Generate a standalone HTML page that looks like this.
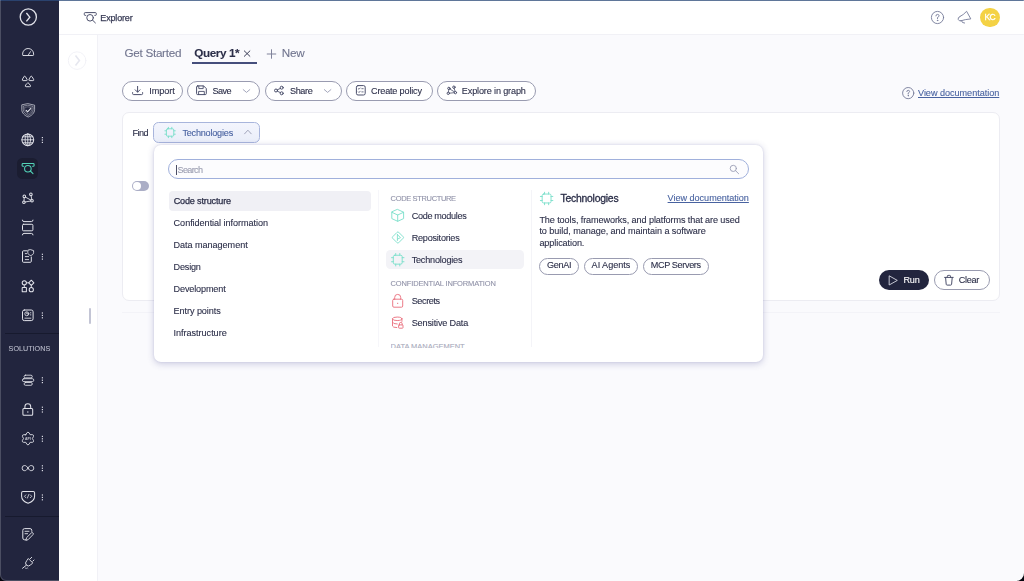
<!DOCTYPE html>
<html><head><meta charset="utf-8">
<style>
*{box-sizing:border-box;margin:0;padding:0}
html,body{width:1024px;height:581px;overflow:hidden;background:#fafafd;font-family:"Liberation Sans",sans-serif;color:#2b2e48}
.a{position:absolute}
.t{position:absolute;white-space:nowrap;-webkit-text-stroke:0.1px currentColor}
.pill{position:absolute;border:1px solid #999bb0;background:#fff}
#ic{position:absolute;left:0;top:0;width:1024px;height:581px;pointer-events:none}
</style></head><body>
<!-- sidebar -->
<div class="a" style="left:0;top:0;width:58.5px;height:581px;background:#22253e"></div>
<div class="a" style="left:17.3px;top:157.8px;width:21.1px;height:21.7px;border-radius:5.5px;background:#1b1d31"></div>
<div class="a" style="left:5px;top:333px;width:54px;height:1px;background:#171a2e"></div>
<div class="a" style="left:5px;top:516px;width:54px;height:1px;background:#171a2e"></div>
<!-- header -->
<div class="a" style="left:59px;top:0;width:965px;height:34px;background:#fff"></div>
<div class="a" style="left:59px;top:34px;width:965px;height:1px;background:#f1f1f6"></div>
<div class="a" style="left:979.9px;top:7.7px;width:19.7px;height:19.7px;border-radius:10px;background:#f4d245"></div>
<!-- left collapsed panel -->
<div class="a" style="left:59px;top:35px;width:38px;height:546px;background:#fff"></div>
<div class="a" style="left:97px;top:35px;width:1px;height:546px;background:#f1f1f6"></div>
<div class="a" style="left:89px;top:307.6px;width:1.8px;height:16.8px;background:#c3c5d5;border-radius:1px"></div>
<!-- window edge lines -->
<div class="a" style="left:0;top:0;width:1024px;height:1px;background:#5f7699"></div>
<div class="a" style="left:0;top:0;width:58.5px;height:1px;background:#2a426e"></div>
<div class="a" style="left:0;top:-12px;width:1024px;height:593px;border:1px solid rgba(255,255,255,.19);border-radius:0 0 8px 6px;box-shadow:0 0 0 20px #04050d"></div>
<!-- tab underline -->
<div class="a" style="left:191.5px;top:62px;width:65px;height:2px;background:#454e7c"></div>
<!-- toolbar pills -->
<div class="pill" style="left:122px;top:81px;width:61px;height:19.5px;border-radius:10px"></div>
<div class="pill" style="left:187px;top:81px;width:73px;height:19.5px;border-radius:10px"></div>
<div class="pill" style="left:265px;top:81px;width:76.5px;height:19.5px;border-radius:10px"></div>
<div class="pill" style="left:346px;top:81px;width:86.5px;height:19.5px;border-radius:10px"></div>
<div class="pill" style="left:437px;top:81px;width:99px;height:19.5px;border-radius:10px"></div>
<!-- card -->
<div class="a" style="left:122px;top:112px;width:878px;height:188.5px;background:#fff;border:1px solid #ececf2;border-radius:7px"></div>
<div class="a" style="left:153px;top:122px;width:107px;height:20.5px;background:linear-gradient(#f3f5fd,#eaeef9);border:1px solid #a8b5dc;border-radius:5.5px"></div>
<div class="a" style="left:132px;top:181px;width:17px;height:10px;border-radius:5px;background:#abaec6"></div>
<div class="a" style="left:133px;top:182px;width:8px;height:8px;border-radius:4px;background:#fff"></div>
<div class="a" style="left:879px;top:270px;width:50.2px;height:20px;border-radius:10px;background:#22253e"></div>
<div class="pill" style="left:934px;top:270px;width:56px;height:20px;border-radius:10px"></div>
<div class="a" style="left:122px;top:312px;width:878px;height:1px;background:#f3f3f8"></div>
<!-- dropdown -->
<div class="a" style="left:154px;top:145px;width:609px;height:216.8px;background:#fff;border-radius:7px;box-shadow:0 1.5px 7px rgba(60,60,140,.24),0 0 2px rgba(60,60,140,.16)"></div>
<div class="a" style="left:168px;top:159px;width:581.2px;height:19.8px;border:1px solid #a0b0dc;border-radius:10px;background:#fcfcfe"></div>
<div class="a" style="left:176px;top:164.5px;width:1px;height:10px;background:#4a4d66"></div>
<div class="a" style="left:169px;top:191px;width:202px;height:19.5px;background:#f0f0f5;border-radius:4px"></div>
<div class="a" style="left:386px;top:249.7px;width:138px;height:19.8px;background:#f3f3f7;border-radius:4.5px"></div>
<div class="a" style="left:531px;top:190px;width:1px;height:157px;background:#f4f4f8"></div>
<div class="a" style="left:378px;top:190px;width:1px;height:157px;background:#f6f6fa"></div>
<div class="a" style="left:390.6px;top:343px;width:80px;height:4.5px;overflow:hidden"><div class="t" style="left:0;top:0.4px;font-size:7.5px;line-height:8.6px;color:#a9abbc;letter-spacing:-0.02px">DATA MANAGEMENT</div></div>
<div class="pill" style="left:539.4px;top:257.5px;width:40px;height:17px;border-radius:9px"></div>
<div class="pill" style="left:583.9px;top:257.5px;width:54px;height:17px;border-radius:9px"></div>
<div class="pill" style="left:643.2px;top:257.5px;width:65.6px;height:17px;border-radius:9px"></div>
<div id="tx" style="position:absolute;left:0;top:0;width:1024px;height:581px;will-change:transform">
<div class="t" style="left:100.30px;top:13.46px;font-size:9px;line-height:10.341px;font-weight:400;color:#3a3d57;letter-spacing:-0.159px;-webkit-text-stroke:0.25px #3a3d57;">Explorer</div>
<div class="t" style="left:984.40px;top:13.11px;font-size:8.5px;line-height:9.767px;font-weight:400;color:#ffffff;letter-spacing:-0.612px;-webkit-text-stroke:0.3px #fff;">KC</div>
<div class="t" style="left:124.50px;top:46.31px;font-size:11.7px;line-height:13.443px;font-weight:400;color:#70748e;letter-spacing:-0.288px;">Get Started</div>
<div class="t" style="left:194.20px;top:46.31px;font-size:11.7px;line-height:13.443px;font-weight:700;color:#2b2e48;letter-spacing:-0.383px;">Query 1*</div>
<div class="t" style="left:281.80px;top:46.31px;font-size:11.7px;line-height:13.443px;font-weight:400;color:#70748e;letter-spacing:-0.195px;">New</div>
<div class="t" style="left:149.30px;top:85.66px;font-size:9.1px;line-height:10.456px;font-weight:400;color:#2b2e48;letter-spacing:-0.036px;">Import</div>
<div class="t" style="left:212.50px;top:85.66px;font-size:9.1px;line-height:10.456px;font-weight:400;color:#2b2e48;letter-spacing:-0.545px;">Save</div>
<div class="t" style="left:290.00px;top:85.66px;font-size:9.1px;line-height:10.456px;font-weight:400;color:#2b2e48;letter-spacing:-0.395px;">Share</div>
<div class="t" style="left:371.00px;top:85.66px;font-size:9.1px;line-height:10.456px;font-weight:400;color:#2b2e48;letter-spacing:-0.173px;">Create policy</div>
<div class="t" style="left:461.80px;top:85.66px;font-size:9.1px;line-height:10.456px;font-weight:400;color:#2b2e48;letter-spacing:-0.142px;">Explore in graph</div>
<div class="t" style="left:918.00px;top:87.76px;font-size:9.1px;line-height:10.456px;font-weight:400;color:#4862a0;letter-spacing:-0.026px;text-decoration:underline;text-underline-offset:1px;">View documentation</div>
<div class="t" style="left:132.40px;top:128.36px;font-size:9.1px;line-height:10.456px;font-weight:400;color:#2b2e48;letter-spacing:-0.534px;">Find</div>
<div class="t" style="left:182.40px;top:128.36px;font-size:9.1px;line-height:10.456px;font-weight:400;color:#4862a0;letter-spacing:-0.209px;">Technologies</div>
<div class="t" style="left:177.60px;top:165.46px;font-size:9.1px;line-height:10.456px;font-weight:400;color:#9a9db0;letter-spacing:-0.686px;">Search</div>
<div class="t" style="left:173.70px;top:195.66px;font-size:9.1px;line-height:10.456px;font-weight:400;color:#2b2e48;letter-spacing:-0.166px;-webkit-text-stroke:0.25px #2b2e48;">Code structure</div>
<div class="t" style="left:173.60px;top:217.86px;font-size:9.1px;line-height:10.456px;font-weight:400;color:#2b2e48;letter-spacing:-0.046px;">Confidential information</div>
<div class="t" style="left:173.60px;top:239.86px;font-size:9.1px;line-height:10.456px;font-weight:400;color:#2b2e48;letter-spacing:-0.052px;">Data management</div>
<div class="t" style="left:173.60px;top:261.76px;font-size:9.1px;line-height:10.456px;font-weight:400;color:#2b2e48;letter-spacing:-0.202px;">Design</div>
<div class="t" style="left:173.60px;top:283.76px;font-size:9.1px;line-height:10.456px;font-weight:400;color:#2b2e48;letter-spacing:-0.149px;">Development</div>
<div class="t" style="left:173.60px;top:305.76px;font-size:9.1px;line-height:10.456px;font-weight:400;color:#2b2e48;letter-spacing:-0.076px;">Entry points</div>
<div class="t" style="left:173.60px;top:327.76px;font-size:9.1px;line-height:10.456px;font-weight:400;color:#2b2e48;letter-spacing:-0.037px;">Infrastructure</div>
<div class="t" style="left:390.60px;top:195.31px;font-size:7.5px;line-height:8.617px;font-weight:400;color:#9092a8;letter-spacing:-0.347px;">CODE STRUCTURE</div>
<div class="t" style="left:411.70px;top:210.56px;font-size:9.1px;line-height:10.456px;font-weight:400;color:#2b2e48;letter-spacing:-0.331px;">Code modules</div>
<div class="t" style="left:411.70px;top:232.56px;font-size:9.1px;line-height:10.456px;font-weight:400;color:#2b2e48;letter-spacing:-0.232px;">Repositories</div>
<div class="t" style="left:411.70px;top:255.36px;font-size:9.1px;line-height:10.456px;font-weight:400;color:#2b2e48;letter-spacing:-0.209px;">Technologies</div>
<div class="t" style="left:390.60px;top:280.01px;font-size:7.5px;line-height:8.617px;font-weight:400;color:#9092a8;letter-spacing:-0.150px;">CONFIDENTIAL INFORMATION</div>
<div class="t" style="left:411.70px;top:295.76px;font-size:9.1px;line-height:10.456px;font-weight:400;color:#2b2e48;letter-spacing:-0.391px;">Secrets</div>
<div class="t" style="left:411.70px;top:317.66px;font-size:9.1px;line-height:10.456px;font-weight:400;color:#2b2e48;letter-spacing:-0.157px;">Sensitive Data</div>
<div class="t" style="left:560.50px;top:193.49px;font-size:10.4px;line-height:11.95px;font-weight:400;color:#2b2e48;letter-spacing:-0.232px;-webkit-text-stroke:0.3px #2b2e48;">Technologies</div>
<div class="t" style="left:667.60px;top:192.96px;font-size:9.1px;line-height:10.456px;font-weight:400;color:#4862a0;letter-spacing:-0.026px;text-decoration:underline;text-underline-offset:1px;">View documentation</div>
<div class="t" style="left:539.40px;top:214.56px;font-size:9.1px;line-height:10.456px;font-weight:400;color:#2b2e48;letter-spacing:-0.099px;">The tools, frameworks, and platforms that are used</div>
<div class="t" style="left:539.40px;top:226.26px;font-size:9.1px;line-height:10.456px;font-weight:400;color:#2b2e48;letter-spacing:-0.061px;">to build, manage, and maintain a software</div>
<div class="t" style="left:539.40px;top:238.26px;font-size:9.1px;line-height:10.456px;font-weight:400;color:#2b2e48;letter-spacing:-0.092px;">application.</div>
<div class="t" style="left:547.10px;top:260.26px;font-size:9.1px;line-height:10.456px;font-weight:400;color:#2b2e48;letter-spacing:-0.345px;">GenAI</div>
<div class="t" style="left:591.60px;top:260.26px;font-size:9.1px;line-height:10.456px;font-weight:400;color:#2b2e48;letter-spacing:-0.030px;">AI Agents</div>
<div class="t" style="left:650.70px;top:260.26px;font-size:9.1px;line-height:10.456px;font-weight:400;color:#2b2e48;letter-spacing:-0.351px;">MCP Servers</div>
<div class="t" style="left:903.50px;top:274.96px;font-size:9.1px;line-height:10.456px;font-weight:400;color:#ffffff;letter-spacing:-0.194px;">Run</div>
<div class="t" style="left:958.80px;top:274.96px;font-size:9.1px;line-height:10.456px;font-weight:400;color:#2b2e48;letter-spacing:-0.334px;">Clear</div>
<div class="t" style="left:8.60px;top:345.48px;font-size:7.2px;line-height:8.273px;font-weight:400;color:#b9bbca;letter-spacing:0.007px;">SOLUTIONS</div>
</div>
<svg id="ic" width="1024" height="581" viewBox="0 0 1024 581" fill="none" stroke-linecap="round" stroke-linejoin="round">
<!-- ===== sidebar icons ===== -->
<g stroke="#e2e3ea" stroke-width="1.02">
 <!-- top circle chevron -->
 <circle cx="28.3" cy="17" r="8.1" stroke-width="1.3"/>
 <path d="M26.4 13 L29.8 17.2 L26.4 21.4" stroke-width="1.35" stroke-linecap="butt" stroke-linejoin="miter"/>
 <!-- gauge -->
 <path d="M23.3 55.5 H32.9 Q33.6 55.5 33.6 54.8 V54 A5.5 5.5 0 0 0 22.6 54 V54.8 Q22.6 55.5 23.3 55.5 Z" stroke-width="0.95"/>
 <path d="M28.2 55.2 L30.4 51.7" stroke-width="0.9"/>
 <!-- three triangles -->
 <path d="M24.00 76.60 Q24.70 75.20 25.40 76.60 L27.00 79.30 Q27.60 80.60 26.30 80.60 L23.10 80.60 Q21.80 80.60 22.40 79.30 Z M30.60 76.60 Q31.30 75.20 32.00 76.60 L33.60 79.30 Q34.20 80.60 32.90 80.60 L29.70 80.60 Q28.40 80.60 29.00 79.30 Z M27.20 83.20 Q27.90 81.80 28.60 83.20 L30.40 85.40 Q31.00 86.70 29.70 86.70 L26.10 86.70 Q24.80 86.70 25.40 85.40 Z" stroke-width="0.95"/>
 <!-- shield check -->
 <path d="M28.2 103.7 L34.6 105.2 V109.6 C34.6 113 31.6 115.7 28.2 117 C24.8 115.7 21.8 113 21.8 109.6 V105.2 Z" stroke-width="0.8" opacity="0.85"/>
 <path d="M28.2 105.3 L33.1 106.4 V109.6 C33.1 112.3 30.8 114.3 28.2 115.4 C25.6 114.3 23.3 112.3 23.3 109.6 V106.4 Z" stroke-width="0.7" opacity="0.7"/>
 <path d="M28.2 106.9 L31.7 107.7 V109.6 C31.7 111.6 30 113 28.2 113.8 C26.4 113 24.7 111.6 24.7 109.6 V107.7 Z" stroke-width="0.6" opacity="0.55"/>
 <path d="M26.2 110.4 L27.6 111.8 L30.6 108.6" stroke-width="1.15"/>
 <!-- globe -->
 <circle cx="27.8" cy="139.8" r="5.9"/>
 <ellipse cx="27.8" cy="139.8" rx="2.7" ry="5.9" stroke-width="0.9"/>
 <path d="M27.8 133.9 V145.7 M21.9 139.8 H33.7 M22.8 136.8 H32.8 M22.8 142.8 H32.8" stroke-width="0.9"/>
 <!-- graph -->
 <circle cx="30.9" cy="194.4" r="1.3"/><circle cx="24.3" cy="196.4" r="1.3"/><circle cx="23.9" cy="202.2" r="1.3"/><circle cx="32" cy="200.8" r="1.3"/>
 <path d="M31.1 195.7 L31.8 199.5 M24.2 197.7 L24 200.9 M25.2 202 L30.7 201 M25.4 197.1 L30.9 200.1" stroke-width="0.9"/>
 <!-- bracket rect -->
 <path d="M22.4 220.1 Q22.4 221.6 24 221.6 H31.4 Q33 221.6 33 220.1 M22.4 234.9 Q22.4 233.4 24 233.4 H31.4 Q33 233.4 33 234.9" stroke-width="1"/>
 <rect x="22.5" y="224.3" width="10.4" height="6.5" rx="1" stroke-width="1"/>
 <!-- doc shield -->
 <path d="M26.6 250.8 H23.5 Q22.5 250.8 22.5 251.8 V261.3 Q22.5 262.3 23.5 262.3 H30.3 Q31.3 262.3 31.3 261.3 V257" stroke-width="1"/>
 <path d="M30.7 249.7 L33.6 250.6 V252.6 C33.6 254.1 32.3 255 30.7 255.6 C29.1 255 27.8 254.1 27.8 252.6 V250.6 Z" stroke-width="0.9"/>
 <path d="M25.3 253.6 H26.6 M25.3 256.6 H28.6 M25.3 259.6 H28.6" stroke-width="0.9"/>
 <!-- shapes -->
 <circle cx="24.3" cy="282.8" r="2.1"/><circle cx="31.3" cy="289.7" r="2.1"/>
 <path d="M31.3 280.2 L33.9 282.8 L31.3 285.4 L28.7 282.8 Z"/>
 <rect x="22.2" y="287.6" width="4.2" height="4.2" rx="0.4"/>
 <path d="M26.4 282.8 H28.7 M24.3 284.9 V287.6 M31.3 285.4 V287.6" stroke-width="0.9"/>
 <!-- report -->
 <rect x="22.5" y="310" width="10.6" height="10.6" rx="1.8" stroke-width="1"/>
 <circle cx="26.8" cy="313.8" r="2" stroke-width="0.85"/>
 <path d="M26.8 312.7 V313.9 H27.8 M30.4 312.8 H30.9 M30.4 314.9 H30.9 M24.9 318.2 H30.9" stroke-width="0.85"/>
 <!-- stack -->
 <rect x="24.1" y="375.2" width="8.2" height="2.7" rx="1.35" stroke-width="0.85"/>
 <rect x="22.4" y="378.7" width="11.4" height="2.9" rx="1.45" stroke-width="0.85"/>
 <rect x="24.1" y="382.5" width="8.2" height="2.8" rx="1.4" stroke-width="0.85"/>
 <!-- lock -->
 <rect x="22.9" y="408.6" width="9.8" height="6.6" rx="1"/>
 <path d="M24.9 408.6 V406.7 A2.9 2.9 0 0 1 30.7 406.7 V408.6"/>
 <rect x="27.2" y="411.4" width="1.2" height="1.2" fill="#e6e7ee" stroke="none"/>
 <!-- api gear -->
 <path d="M25.75 434.69 Q27.95 429.50 30.15 434.69 Q35.74 434.00 32.35 438.50 Q35.74 443.00 30.15 442.31 Q27.95 447.50 25.75 442.31 Q20.16 443.00 23.55 438.50 Q20.16 434.00 25.75 434.69 Z" stroke-width="0.9"/>
 <!-- infinity -->
 <path d="M27.95 468.1 C26.9 466.3 25.9 465.5 24.7 465.5 A2.6 2.6 0 1 0 24.7 470.7 C25.9 470.7 26.9 469.9 27.95 468.1 C29 466.3 30 465.5 31.2 465.5 A2.6 2.6 0 1 1 31.2 470.7 C30 470.7 29 469.9 27.95 468.1 Z" stroke-width="0.9"/>
 <!-- shield code -->
 <path d="M23 491.5 H33.2 Q34.6 491.5 34.6 492.9 V496.2 C34.6 500 31.6 502 28.1 503.3 C24.6 502 21.6 500 21.6 496.2 V492.9 Q21.6 491.5 23 491.5 Z"/>
 <path d="M25.8 494.9 L24.5 496.3 L25.8 497.7 M30.4 494.9 L31.7 496.3 L30.4 497.7 M28.8 494.5 L27.4 498.1" stroke-width="0.8"/>
 <!-- note -->
 <path d="M31.8 531.4 V530.4 Q31.8 528.6 30 528.6 H24.6 Q22.8 528.6 22.8 530.4 V538 Q22.8 539.8 24.6 539.8 H25.6" stroke-width="1"/>
 <path d="M25 531.3 H29 M25 533.7 H27.6" stroke-width="0.9"/>
 <path d="M26 540 L26.6 537.6 L31.4 532.9 Q32.2 532.2 33 533 Q33.8 533.8 33 534.6 L28.4 539.4 Z" stroke-width="0.9"/>
 <!-- plug -->
 <path d="M28.6 558.8 L32.7 562.9 L30.6 565 Q28.4 567 26.3 565.1 Q24.5 563 26.5 560.9 Z" stroke-width="0.95"/>
 <path d="M30.3 558.7 L31.7 557.3 M32.8 561.2 L34 560 M26.2 565.3 L22.5 568.3" stroke-width="0.95"/>
 <path d="M25.2 568.4 q0.7 -1.1 1.4 0 q0.7 -1.1 1.4 0" stroke-width="0.7"/>
</g>
<text x="27.95" y="439.7" font-family="Liberation Sans" font-size="3.4" font-weight="700" fill="#e6e7ee" opacity="0.85" text-anchor="middle" stroke="none">API</text>
<!-- active explorer icon (teal) -->
<g id="expl" stroke="#52d3b8" stroke-width="1.05">
 <path d="M23.6 166.3 H23 Q22.1 166.3 22.1 165.4 V164.4 Q22.1 163.5 23 163.5 H33.2 Q34.1 163.5 34.1 164.4 V165.4 Q34.1 166.3 33.2 166.3 H32.6"/>
 <circle cx="27.87" cy="168.7" r="3.3"/>
 <path d="M30.3 171 L33 173.6"/>
</g>
<!-- sidebar dots -->
<g fill="#dcdde6" stroke="none">
 <rect x="41.8" y="137" width="1.2" height="1.2"/><rect x="41.8" y="139.4" width="1.2" height="1.2"/><rect x="41.8" y="141.8" width="1.2" height="1.2"/>
 <rect x="41.8" y="253.7" width="1.2" height="1.2"/><rect x="41.8" y="256.1" width="1.2" height="1.2"/><rect x="41.8" y="258.5" width="1.2" height="1.2"/>
 <rect x="41.8" y="312.4" width="1.2" height="1.2"/><rect x="41.8" y="314.8" width="1.2" height="1.2"/><rect x="41.8" y="317.2" width="1.2" height="1.2"/>
 <rect x="41.8" y="377.2" width="1.2" height="1.2"/><rect x="41.8" y="379.6" width="1.2" height="1.2"/><rect x="41.8" y="382" width="1.2" height="1.2"/>
 <rect x="41.8" y="406.6" width="1.2" height="1.2"/><rect x="41.8" y="409" width="1.2" height="1.2"/><rect x="41.8" y="411.4" width="1.2" height="1.2"/>
 <rect x="41.8" y="435.8" width="1.2" height="1.2"/><rect x="41.8" y="438.2" width="1.2" height="1.2"/><rect x="41.8" y="440.6" width="1.2" height="1.2"/>
 <rect x="41.8" y="465.2" width="1.2" height="1.2"/><rect x="41.8" y="467.6" width="1.2" height="1.2"/><rect x="41.8" y="470" width="1.2" height="1.2"/>
 <rect x="41.8" y="494.4" width="1.2" height="1.2"/><rect x="41.8" y="496.8" width="1.2" height="1.2"/><rect x="41.8" y="499.2" width="1.2" height="1.2"/>
</g>
<!-- ===== header icons ===== -->
<g stroke="#4a4e6a" stroke-width="1" transform="translate(62.2 -150.9)">
 <path d="M23.6 166.3 H23 Q22.1 166.3 22.1 165.4 V164.4 Q22.1 163.5 23 163.5 H33.2 Q34.1 163.5 34.1 164.4 V165.4 Q34.1 166.3 33.2 166.3 H32.6"/>
 <circle cx="27.87" cy="168.7" r="3.3"/>
 <path d="M30.3 171 L33.2 173.8"/>
</g>
<g stroke="#757b98" stroke-width="0.9">
 <circle cx="937.5" cy="17.5" r="6.1"/>
 <path d="M935.9 15.9 Q935.9 14.4 937.5 14.4 Q939.1 14.4 939.1 15.8 Q939.1 16.8 937.5 17.5 V18.6"/>
 <circle cx="937.5" cy="20.4" r="0.3" fill="#757b98"/>
 <!-- megaphone -->
 <path d="M959.9 16.6 Q963.6 14.8 966.6 11.3 L970.8 18.9 Q965 19.4 960.8 20.8"/>
 <path d="M959.9 16.6 Q957.6 17.4 958.2 19.4 Q958.9 21.3 960.8 20.8"/>
 <path d="M961.5 20.9 Q961.8 23.2 964.6 23.1"/>
 <!-- help 2 -->
 <circle cx="908.2" cy="93.1" r="5.6"/>
 <path d="M906.8 91.6 Q906.8 90.3 908.2 90.3 Q909.6 90.3 909.6 91.5 Q909.6 92.4 908.2 93 V94"/>
 <circle cx="908.2" cy="95.7" r="0.3" fill="#757b98"/>
</g>
<!-- left panel expand circle -->
<circle cx="77.1" cy="60.6" r="8.8" stroke="#f2f2f7" stroke-width="1"/>
<path d="M75.5 55.6 L79.4 60.6 L75.5 65.6" stroke="#e6e7ef" stroke-width="1.6" stroke-linecap="butt" stroke-linejoin="miter"/>
<!-- tab × and + -->
<path d="M244.3 50.9 L249.9 56.3 M249.9 50.9 L244.3 56.3" stroke="#3a3d57" stroke-width="1"/>
<path d="M267.2 54 H275.8 M271.5 49.7 V58.3" stroke="#80839b" stroke-width="1"/>
<!-- ===== toolbar icons ===== -->
<g stroke="#4a4e6a" stroke-width="1">
 <!-- import -->
 <path d="M137.6 86.4 V92 M135.2 89.8 L137.6 92.2 L140 89.8 M132.6 92.6 V93.6 Q132.6 94.6 133.6 94.6 H141.6 Q142.6 94.6 142.6 93.6 V92.6"/>
 <!-- save -->
 <path d="M197.6 85.9 H203.6 L206.3 88.6 V93.6 Q206.3 94.6 205.3 94.6 H197.6 Q196.6 94.6 196.6 93.6 V86.9 Q196.6 85.9 197.6 85.9 Z"/>
 <path d="M198.8 86 V88.6 H203.2 V86 M198.6 94.5 V91.4 H204.3 V94.5" stroke-width="0.9"/>
 <!-- share -->
 <circle cx="276" cy="90.5" r="1.5"/><circle cx="281.7" cy="87.7" r="1.5"/><circle cx="281.7" cy="93.3" r="1.5"/>
 <path d="M277.4 89.8 L280.3 88.4 M277.4 91.2 L280.3 92.6" stroke-width="0.9"/>
 <!-- create policy -->
 <rect x="356.4" y="85.6" width="8.8" height="9.4" rx="1.6"/>
 <path d="M358.4 88.7 L359 89.3 L360.2 88 M358.4 91.9 L359 92.5 L360.2 91.2 M361.8 88.7 H363.2 M361.8 91.9 H363.2" stroke-width="0.8"/>
 <!-- explore in graph -->
 <circle cx="453.9" cy="87.2" r="1.2"/><circle cx="448.9" cy="88.4" r="1.2"/><circle cx="448.3" cy="93.3" r="1.2"/><circle cx="455.4" cy="92.6" r="1.2"/>
 <path d="M454.2 88.4 L455.1 91.4 M448.8 89.6 L448.4 92.1 M449.5 93.2 L454.2 92.7 M449.9 89 L454.4 91.9" stroke-width="0.8"/>
 <!-- trash -->
 <path d="M944.6 277.4 H953.2 M947.3 277.2 V276.2 Q947.3 275.4 948.1 275.4 H949.7 Q950.5 275.4 950.5 276.2 V277.2 M945.6 277.6 L946.2 284.3 Q946.3 285.1 947.1 285.1 H950.7 Q951.5 285.1 951.6 284.3 L952.2 277.6"/>
</g>
<g stroke="#9a9db4" stroke-width="0.9">
 <path d="M243.2 89.6 L246.5 92.4 L249.8 89.6"/>
 <path d="M324.3 89.6 L327.6 92.4 L330.9 89.6"/>
 <path d="M244.6 133.8 L247.9 130.2 L251.2 133.8"/>
 <!-- search magnifier -->
 <circle cx="733.3" cy="168.4" r="3.1"/>
 <path d="M735.6 170.7 L738.6 173.7"/>
</g>
<!-- run play -->
<path d="M889.5 276 L897.3 280.4 L889.5 284.8 Z" stroke="#d8d9e3" stroke-width="0.9"/>
<!-- ===== teal chip icons ===== -->
<g stroke="#78dfc9" stroke-width="0.9">
 <g>
  <rect x="166.4" y="128.8" width="7.4" height="7.4" rx="1.2" vector-effect="non-scaling-stroke"/>
  <path vector-effect="non-scaling-stroke" d="M168.4 127.3 V128.8 M171.8 127.3 V128.8 M168.4 136.2 V137.7 M171.8 136.2 V137.7 M164.9 130.8 H166.4 M164.9 134.2 H166.4 M173.8 130.8 H175.3 M173.8 134.2 H175.3"/>
 </g>
 <g transform="translate(397.75 259.7) scale(1.2) translate(-170.1 -132.5)"><rect x="166.4" y="128.8" width="7.4" height="7.4" rx="1.2" vector-effect="non-scaling-stroke"/>
  <path vector-effect="non-scaling-stroke" d="M168.4 127.3 V128.8 M171.8 127.3 V128.8 M168.4 136.2 V137.7 M171.8 136.2 V137.7 M164.9 130.8 H166.4 M164.9 134.2 H166.4 M173.8 130.8 H175.3 M173.8 134.2 H175.3"/></g>
 <g transform="translate(546.6 198.5) scale(1.2) translate(-170.1 -132.5)"><rect x="166.4" y="128.8" width="7.4" height="7.4" rx="1.2" vector-effect="non-scaling-stroke"/>
  <path vector-effect="non-scaling-stroke" d="M168.4 127.3 V128.8 M171.8 127.3 V128.8 M168.4 136.2 V137.7 M171.8 136.2 V137.7 M164.9 130.8 H166.4 M164.9 134.2 H166.4 M173.8 130.8 H175.3 M173.8 134.2 H175.3"/></g>
 <!-- cube -->
 <path d="M397.7 209.5 L403.6 212.2 V218.6 L397.7 221.3 L391.8 218.6 V212.2 Z M391.9 212.3 L397.7 215 L403.5 212.3 M397.7 215 V221.2"/>
 <!-- repo diamond -->
 <path d="M397.2 232.2 Q397.9 231.5 398.6 232.2 L403.2 236.8 Q403.9 237.5 403.2 238.2 L398.6 242.8 Q397.9 243.5 397.2 242.8 L392.6 238.2 Q391.9 237.5 392.6 236.8 Z"/>
 <path d="M397.4 234.4 V240.5 M397.4 234.7 L400.5 237.6 L397.6 239.1" stroke-width="0.85"/>
</g>
<!-- ===== red icons ===== -->
<g stroke="#ea7482" stroke-width="0.95">
 <rect x="392.7" y="299.2" width="10" height="8" rx="1.2"/>
 <path d="M394.7 299.2 V297.4 A3 3 0 0 1 400.7 297.4 V299.2"/>
 <rect x="397.1" y="302.8" width="1.1" height="1.1" fill="#ea7482" stroke="none"/>
 <!-- db lock -->
 <ellipse cx="397.2" cy="318.8" rx="4.7" ry="1.75"/>
 <path d="M392.5 318.8 V326 Q392.6 327.5 396.8 327.6 M392.5 322.4 Q392.7 324 397.3 324 M401.9 318.8 V321.4"/>
 <rect x="398.6" y="324.9" width="4.4" height="3.3" rx="0.6"/>
 <path d="M399.4 324.9 V323.8 A1.4 1.4 0 0 1 402.2 323.8 V324.9"/>
</g>
</svg>

</body></html>
